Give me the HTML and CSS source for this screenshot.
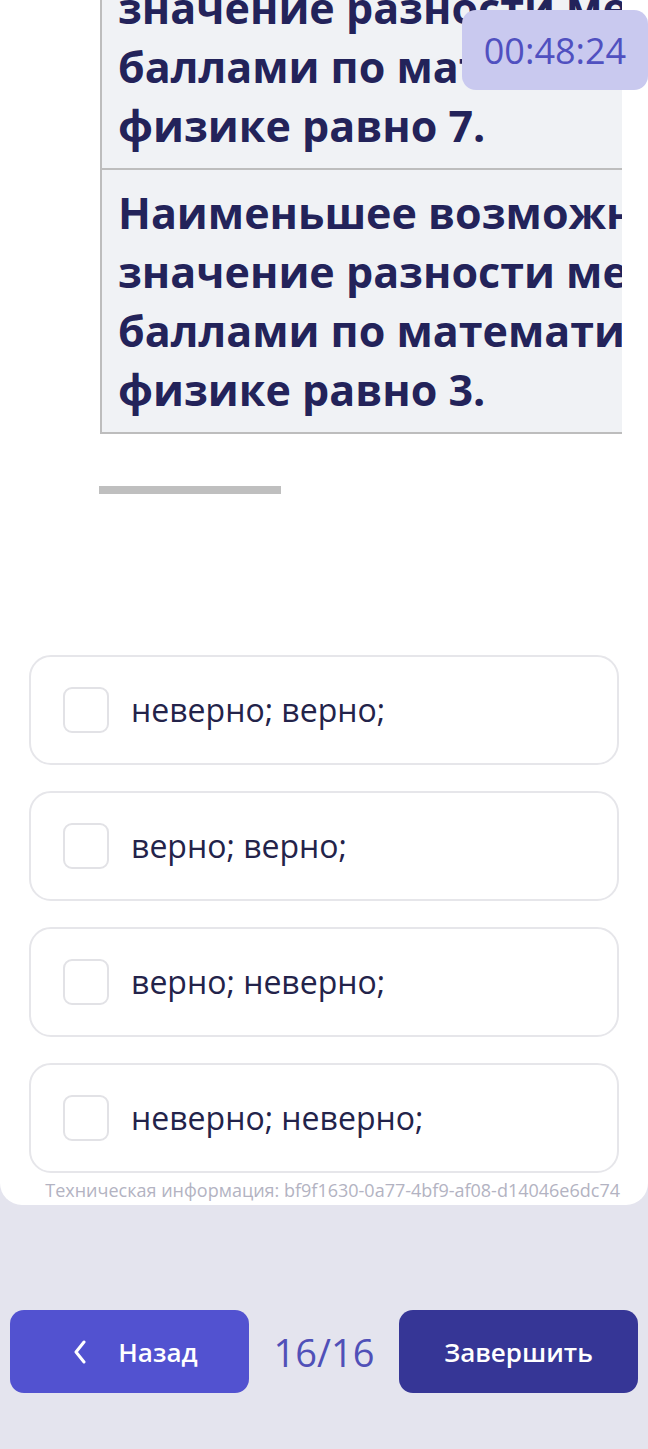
FILE: index.html
```html
<!DOCTYPE html>
<html lang="ru">
<head>
<meta charset="utf-8">
<title>Тест</title>
<link rel="stylesheet" href="styles.css">
</head>
<body>
<div class="sheet">
  <div class="question">
    <div class="tablewrap">
      <table class="qtable">
        <tr><td>Наибольшее возможное<br>значение разности между<br>баллами по математике и<br>физике равно 7.</td></tr>
        <tr><td>Наименьшее возможное<br>значение разности между<br>баллами по математике и<br>физике равно 3.</td></tr>
      </table>
    </div>
    <div class="scrollbar"></div>
  </div>
  <div class="options">
    <label class="option"><span class="box"></span><span class="otext">неверно; верно;</span></label>
    <label class="option"><span class="box"></span><span class="otext">верно; верно;</span></label>
    <label class="option"><span class="box"></span><span class="otext">верно; неверно;</span></label>
    <label class="option"><span class="box"></span><span class="otext">неверно; неверно;</span></label>
  </div>
  <div class="tech">Техническая информация: bf9f1630-0a77-4bf9-af08-d14046e6dc74</div>
</div>
<div class="timer">00:48:24</div>
<nav class="footer">
  <button class="btn back"><svg class="chev" width="14" height="24" viewBox="0 0 14 24"><polyline points="11,2 3,12 11,22" fill="none" stroke="#fff" stroke-width="3" stroke-linecap="round" stroke-linejoin="round"/></svg><span>Назад</span></button>
  <div class="counter">16/16</div>
  <button class="btn finish">Завершить</button>
</nav>
</body>
</html>
```
FILE: styles.css
```css
html, body {
  margin: 0;
  padding: 0;
}
body {
  background: #e4e4ee;
  font-family: "Open Sans", "Noto Sans", sans-serif;
  width: 648px;
  min-height: 1449px;
  position: relative;
  overflow: hidden;
}
.sheet {
  background: #ffffff;
  border-radius: 0 0 22px 22px;
  padding-bottom: 3px;
}
.question {
  overflow: hidden;
}
.tablewrap {
  margin-top: -94px;
  margin-left: 100px;
  width: 520px;
  overflow: hidden;
  border-left: 2px solid #bdbdbd;
}
.qtable {
  border-collapse: collapse;
  width: 820px;
}
.qtable td {
  background: #f0f2f5;
  color: #23235a;
  font-weight: 700;
  font-size: 43px;
  line-height: 59px;
  padding: 13px 16px 13px 16px;
  border-bottom: 2px solid #bdbdbd;
  white-space: nowrap;
}
.scrollbar {
  margin-top: 52px;
  margin-left: 99px;
  width: 182px;
  height: 8px;
  background: #bfbfbf;
}
.options {
  margin-top: 161px;
  display: flex;
  flex-direction: column;
  gap: 26px;
  padding: 0 29px;
}
.option {
  box-sizing: border-box;
  height: 110px;
  border: 2px solid #e6e6ea;
  border-radius: 22px;
  display: flex;
  align-items: center;
  padding-left: 32px;
  gap: 22px;
}
.box {
  box-sizing: border-box;
  width: 46px;
  height: 46px;
  border: 2px solid #e2e2e6;
  border-radius: 9px;
  flex: none;
}
.otext {
  font-size: 32px;
  color: #23234a;
  line-height: 42px;
}
.tech {
  margin-top: 5px;
  text-align: right;
  padding-right: 28px;
  font-size: 18px;
  line-height: 24px;
  color: #b3b3c2;
}
.timer {
  position: absolute;
  top: 10px;
  right: 0;
  width: 186px;
  height: 80px;
  box-sizing: border-box;
  background: #c9c9ef;
  border-radius: 14px;
  color: #5050c0;
  font-size: 36px;
  display: flex;
  align-items: center;
  justify-content: center;
}
.footer {
  margin-top: 105px;
  display: flex;
  align-items: center;
  justify-content: space-between;
  padding: 0 10px;
}
.btn {
  height: 83px;
  width: 239px;
  border: none;
  border-radius: 14px;
  color: #ffffff;
  font-family: "Open Sans", "Noto Sans", sans-serif;
  font-size: 26px;
  font-weight: 600;
  display: flex;
  align-items: center;
  justify-content: center;
  padding: 0;
}
.back {
  background: #5252d0;
  gap: 31px;
  padding-left: 12px;
}
.finish {
  background: #363696;
}
.counter {
  font-size: 38px;
  color: #5050b8;
}
```
